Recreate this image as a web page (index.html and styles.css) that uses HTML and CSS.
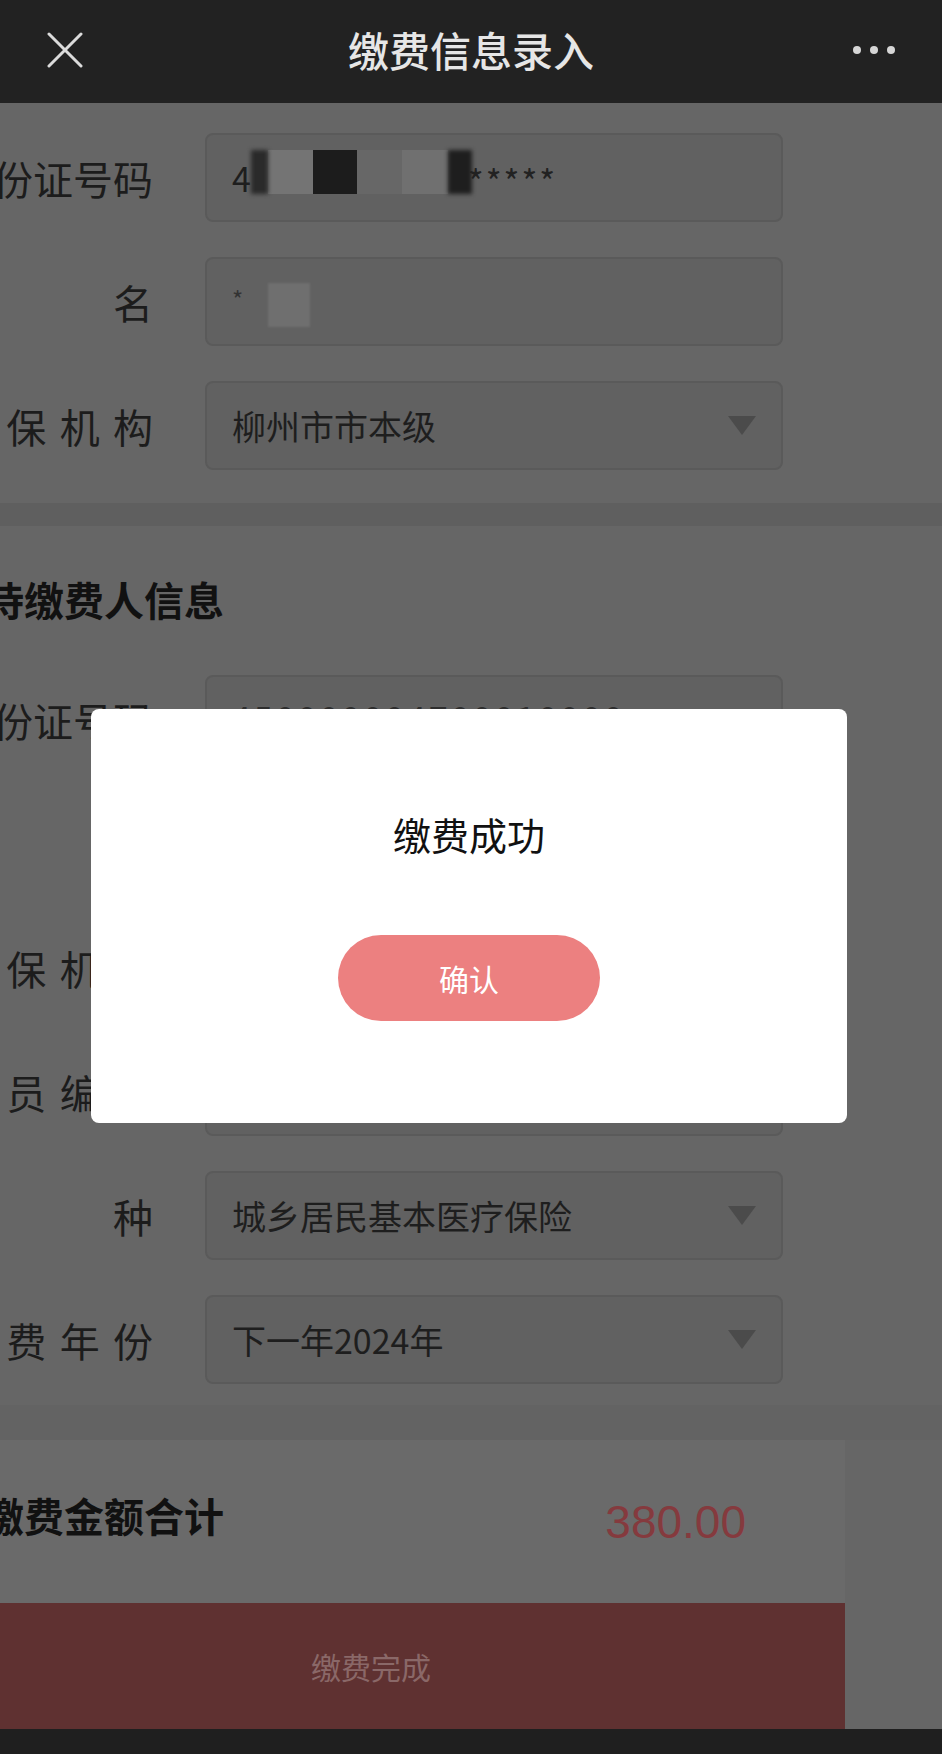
FILE: index.html
```html
<!DOCTYPE html>
<html lang="zh-CN">
<head>
<meta charset="utf-8">
<title>缴费信息录入</title>
<link rel="stylesheet" href="styles.css">
</head>
<body>
<header class="navbar">
  <div class="nav-left">
    <svg class="close-icon" width="36" height="36" viewBox="0 0 36 36"><path d="M2 2 L34 34 M34 2 L2 34" stroke="#dcdcdc" stroke-width="3" stroke-linecap="round" fill="none"/></svg>
  </div>
  <div class="nav-title">缴费信息录入</div>
  <div class="nav-right">
    <span class="dot"></span><span class="dot"></span><span class="dot"></span>
  </div>
</header>

<main class="page">
  <section class="section section-first">
    <div class="row">
      <div class="label">身份证号码</div>
      <div class="field">
        <div class="masked">
          <span class="txt">4</span>
          <span class="blk blk-dark1"></span>
          <span class="blk blk-gray"></span>
          <span class="blk blk-black"></span>
          <span class="blk blk-bg"></span>
          <span class="blk blk-light"></span>
          <span class="blk blk-dark2"></span>
          <span class="txt stars">******</span>
        </div>
      </div>
    </div>
    <div class="row">
      <div class="label">姓名</div>
      <div class="field">
        <div class="masked">
          <span class="txt small-star">*</span>
          <span class="blk blk-name"></span>
        </div>
      </div>
    </div>
    <div class="row">
      <div class="label">参保机构</div>
      <div class="field">
        <span>柳州市市本级</span>
        <span class="caret"></span>
      </div>
    </div>
  </section>

  <div class="band"></div>

  <section class="section section-second">
    <h2 class="section-title">待缴费人信息</h2>
    <div class="rows">
      <div class="row">
        <div class="label">身份证号码</div>
        <div class="field"><span class="digits">450000004700010000</span></div>
      </div>
      <div class="row">
        <div class="label">姓名</div>
        <div class="field"><span>*</span></div>
      </div>
      <div class="row">
        <div class="label">参保机构</div>
        <div class="field"><span>柳州市市本级</span><span class="caret"></span></div>
      </div>
      <div class="row">
        <div class="label">人员编号</div>
        <div class="field"><span></span></div>
      </div>
      <div class="row">
        <div class="label">险种</div>
        <div class="field"><span>城乡居民基本医疗保险</span><span class="caret"></span></div>
      </div>
      <div class="row">
        <div class="label">缴费年份</div>
        <div class="field"><span>下一年2024年</span><span class="caret"></span></div>
      </div>
    </div>
  </section>

  <div class="band band-bottom"></div>

  <div class="footer-panel">
    <div class="summary">
      <div class="summary-title">缴费金额合计</div>
      <div class="summary-amount">380.00</div>
    </div>
    <div class="pay-bar">缴费完成</div>
  </div>
</main>

<div class="phone-bar"></div>

<div class="overlay">
  <div class="dialog">
    <div class="dialog-title">缴费成功</div>
    <button class="dialog-btn">确认</button>
  </div>
</div>
</body>
</html>
```

FILE: styles.css
```css
html, body {
  margin: 0;
  padding: 0;
}

body {
  width: 942px;
  height: 1754px;
  overflow: hidden;
  background: #666666;
  font-family: "Noto Sans CJK SC", "Noto Sans", sans-serif;
  color: #1c1c1c;
}

.navbar {
  height: 103px;
  background: #222222;
  display: grid;
  grid-template-columns: 1fr auto 1fr;
  align-items: center;
}

.nav-left {
  padding-left: 47px;
  display: flex;
  align-items: center;
}

.close-icon {
  display: block;
  margin-top: -4px;
}

.nav-title {
  color: #e6e6e6;
  font-size: 41px;
  font-weight: 500;
  line-height: 1;
  margin-top: -4px;
}

.nav-right {
  display: flex;
  justify-content: flex-end;
  gap: 9px;
  padding-right: 47px;
}

.dot {
  width: 8px;
  height: 8px;
  border-radius: 50%;
  background: #d6d6d6;
  margin-top: -3px;
}

.page {
  overflow: hidden;
  width: 942px;
}

.section {
  background: #666666;
}

.section-first {
  padding: 30px 0 33px;
  display: flex;
  flex-direction: column;
  gap: 35px;
}

.row {
  display: flex;
  align-items: center;
  gap: 52px;
  margin-left: -47px;
}

.label {
  width: 200px;
  flex: none;
  font-size: 40px;
  line-height: 1;
  text-align: justify;
  text-align-last: justify;
  color: #1c1c1c;
  white-space: nowrap;
}

.field {
  width: 578px;
  height: 89px;
  flex: none;
  box-sizing: border-box;
  border: 2px solid #5a5a5a;
  border-radius: 8px;
  background: #616161;
  padding: 0 25px;
  display: flex;
  align-items: center;
  justify-content: space-between;
  font-size: 34px;
  color: #1e1e1e;
}

.caret {
  width: 0;
  height: 0;
  border-left: 14.5px solid transparent;
  border-right: 14.5px solid transparent;
  border-top: 19px solid #4b4b4b;
}

.masked {
  display: flex;
  align-items: center;
  height: 100%;
}

.txt {
  line-height: 1;
}

.blk {
  display: block;
  height: 44px;
  margin-top: -12px;
}

.blk-dark1 {
  width: 17px;
  background: #2a2a2a;
  filter: blur(2px);
}

.blk-gray {
  width: 45px;
  background: #747474;
}

.blk-black {
  width: 44px;
  background: #1c1c1c;
}

.blk-bg {
  width: 45px;
  background: #676767;
}

.blk-light {
  width: 46px;
  background: #707070;
}

.blk-dark2 {
  width: 24px;
  background: #1e1e1e;
  filter: blur(2px);
}

.stars {
  margin-left: -22px;
  font-size: 34px;
  letter-spacing: 2px;
  color: #222;
  margin-top: 6px;
}

.small-star {
  font-size: 24px;
  color: #333;
  margin-top: -6px;
}

.blk-name {
  width: 42px;
  height: 44px;
  margin-left: 25px;
  margin-top: 6px;
  background: #6f6f6f;
  filter: blur(1px);
}

.digits {
  color: #2e2e2e;
  letter-spacing: 3px;
  margin-top: -4px;
}

.band {
  height: 23px;
  background: #5f5f5f;
}

.section-second {
  padding: 45px 0 21px;
}

.section-title {
  margin: 0 0 48px -16px;
  font-size: 40px;
  font-weight: 700;
  line-height: 56px;
  color: #111111;
}

.rows {
  display: flex;
  flex-direction: column;
  gap: 35px;
}

.band-bottom {
  height: 35px;
  background: #636363;
}

.footer-panel {
  width: 948px;
  margin-left: -103px;
}

.summary {
  height: 163px;
  box-sizing: border-box;
  background: #6a6a6a;
  padding: 0 99px 0 87px;
  display: flex;
  align-items: center;
  justify-content: space-between;
}

.summary-title {
  font-size: 40px;
  font-weight: 700;
  line-height: 56px;
  color: #111111;
  margin-bottom: 14px;
}

.summary-amount {
  font-family: "Liberation Sans", Arial, sans-serif;
  font-size: 46px;
  line-height: 1;
  color: #853a3e;
}

.pay-bar {
  height: 126px;
  background: #5f3131;
  color: #8a6868;
  font-size: 30px;
  display: flex;
  align-items: center;
  justify-content: center;
}

.phone-bar {
  position: fixed;
  left: 0;
  right: 0;
  bottom: 0;
  height: 25px;
  background: #1f1f1f;
}

.overlay {
  position: fixed;
  left: 0;
  right: 0;
  top: 103px;
  bottom: 25px;
  display: flex;
  align-items: center;
  justify-content: center;
}

.dialog {
  width: 756px;
  box-sizing: border-box;
  background: #ffffff;
  border-radius: 8px;
  padding: 98px 0 102px;
  display: flex;
  flex-direction: column;
  align-items: center;
  margin-left: -4px;
}

.dialog-title {
  font-size: 38px;
  line-height: 53px;
  color: #111111;
  margin-bottom: 75px;
}

.dialog-btn {
  width: 262px;
  height: 86px;
  border: none;
  border-radius: 43px;
  background: #ec8080;
  color: #ffffff;
  font-family: "Noto Sans CJK SC", sans-serif;
  font-size: 30px;
  padding: 0;
}
```
